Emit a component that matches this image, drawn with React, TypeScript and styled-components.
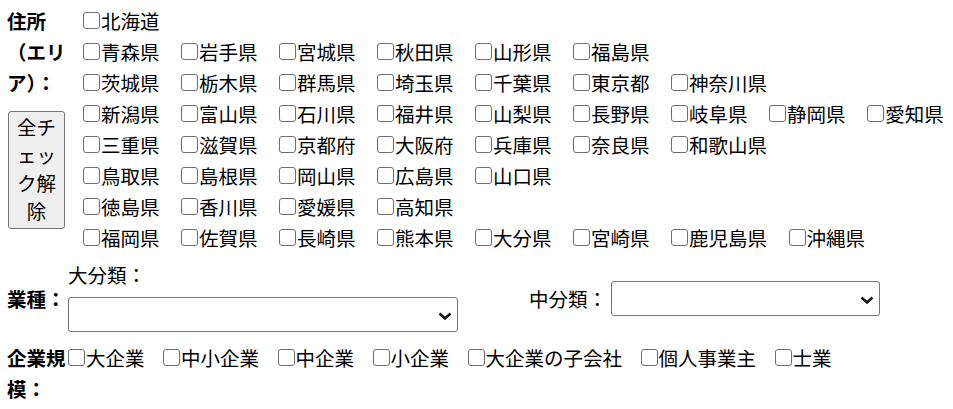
import React from 'react';
import styled, { createGlobalStyle } from 'styled-components';

const GlobalStyle = createGlobalStyle`
  body {
    margin: 0;
    background: #fff;
    color: #000;
    font-family: "Noto Sans CJK JP", "Noto Sans", sans-serif;
    font-size: 19.5px;
  }
`;

const Page = styled.div`
  padding: 5px 0 0 7px;
`;

const AreaSection = styled.div`
  display: grid;
  grid-template-columns: 76px 1fr;
`;

const LabelCell = styled.div`
  display: flex;
  flex-direction: column;
  align-items: flex-start;
`;

const SectionLabel = styled.div<{ $center?: boolean }>`
  max-width: 60px;
  font-weight: bold;
  line-height: 31px;
  align-self: ${(props) => (props.$center ? 'center' : 'start')};
`;

const ResetButton = styled.button`
  box-sizing: border-box;
  width: 57px;
  margin: 13px 0 0 1px;
  padding: 1px 7px 3px;
  border: 1.3px solid #767676;
  border-radius: 3px;
  background: #efefef;
  color: #000;
  font-family: inherit;
  font-size: 19.5px;
  line-height: 28px;
  text-align: center;
`;

const RegionList = styled.div`
  display: flex;
  flex-direction: column;
`;

const CheckRow = styled.div<{ $gap: number }>`
  display: flex;
  flex-wrap: wrap;
  align-content: flex-start;
  align-self: start;
  column-gap: ${(props) => props.$gap}px;
  line-height: 31px;
`;

const CheckItem = styled.label`
  display: inline-flex;
  align-items: center;
  gap: 1px;
  white-space: nowrap;
`;

const Box = styled.input`
  appearance: none;
  -webkit-appearance: none;
  flex: none;
  box-sizing: border-box;
  width: 17px;
  min-width: 17px;
  height: 17px;
  min-height: 17px;
  margin: 0;
  padding: 0;
  border: 1.3px solid #6e6e6e;
  border-radius: 3px;
  background: #fff;
`;

const IndustrySection = styled.div`
  display: grid;
  grid-template-columns: 61px 390px auto;
  margin-top: 6px;
`;

const Field = styled.div`
  display: flex;
  flex-direction: column;
  padding-bottom: 6px;
  line-height: 31px;
`;

const MidField = styled.div`
  display: flex;
  align-items: center;
  gap: 4px;
  margin-left: 71px;
  align-self: center;
`;

const SelectWrap = styled.div<{ $width: number; $top?: number }>`
  position: relative;
  width: ${(props) => props.$width}px;
  height: 35px;
  margin-top: ${(props) => props.$top ?? 0}px;
`;

const Select = styled.select`
  appearance: none;
  box-sizing: border-box;
  width: 100%;
  height: 100%;
  border: 1.3px solid #767676;
  border-radius: 3px;
  background: #fff;
  font-family: inherit;
  font-size: 19.5px;
`;

const Chevron = styled.svg`
  position: absolute;
  right: 6px;
  top: 50%;
  width: 14px;
  height: 8px;
  margin-top: -3px;
  pointer-events: none;
`;

const ScaleSection = styled.div`
  display: grid;
  grid-template-columns: 61px 1fr;
  margin-top: 4px;
`;

const regions = [
  ['北海道'],
  ['青森県', '岩手県', '宮城県', '秋田県', '山形県', '福島県'],
  ['茨城県', '栃木県', '群馬県', '埼玉県', '千葉県', '東京都', '神奈川県'],
  ['新潟県', '富山県', '石川県', '福井県', '山梨県', '長野県', '岐阜県', '静岡県', '愛知県'],
  ['三重県', '滋賀県', '京都府', '大阪府', '兵庫県', '奈良県', '和歌山県'],
  ['鳥取県', '島根県', '岡山県', '広島県', '山口県'],
  ['徳島県', '香川県', '愛媛県', '高知県'],
  ['福岡県', '佐賀県', '長崎県', '熊本県', '大分県', '宮崎県', '鹿児島県', '沖縄県'],
];

const scales = ['大企業', '中小企業', '中企業', '小企業', '大企業の子会社', '個人事業主', '士業'];

function Dropdown({ width, top }: { width: number; top?: number }) {
  return (
    <SelectWrap $width={width} $top={top}>
      <Select defaultValue="">
        <option value=""></option>
      </Select>
      <Chevron viewBox="0 0 14 8">
        <path d="M1.5 1.5 L7 6.5 L12.5 1.5" fill="none" stroke="#111" strokeWidth="2.4" />
      </Chevron>
    </SelectWrap>
  );
}

export default function App() {
  return (
    <Page>
      <GlobalStyle />
      <AreaSection>
        <LabelCell>
          <SectionLabel>住所（エリア）：</SectionLabel>
          <ResetButton type="button">全チェック解除</ResetButton>
        </LabelCell>
        <RegionList>
          {regions.map((row, i) => (
            <CheckRow key={i} $gap={21.5}>
              {row.map((name) => (
                <CheckItem key={name}>
                  <Box type="checkbox" />
                  {name}
                </CheckItem>
              ))}
            </CheckRow>
          ))}
        </RegionList>
      </AreaSection>

      <IndustrySection>
        <SectionLabel $center>業種：</SectionLabel>
        <Field>
          大分類：
          <Dropdown width={390} top={7} />
        </Field>
        <MidField>
          中分類：
          <Dropdown width={269} />
        </MidField>
      </IndustrySection>

      <ScaleSection>
        <SectionLabel>企業規模：</SectionLabel>
        <CheckRow $gap={18.5}>
          {scales.map((name) => (
            <CheckItem key={name}>
              <Box type="checkbox" />
              {name}
            </CheckItem>
          ))}
        </CheckRow>
      </ScaleSection>
    </Page>
  );
}
